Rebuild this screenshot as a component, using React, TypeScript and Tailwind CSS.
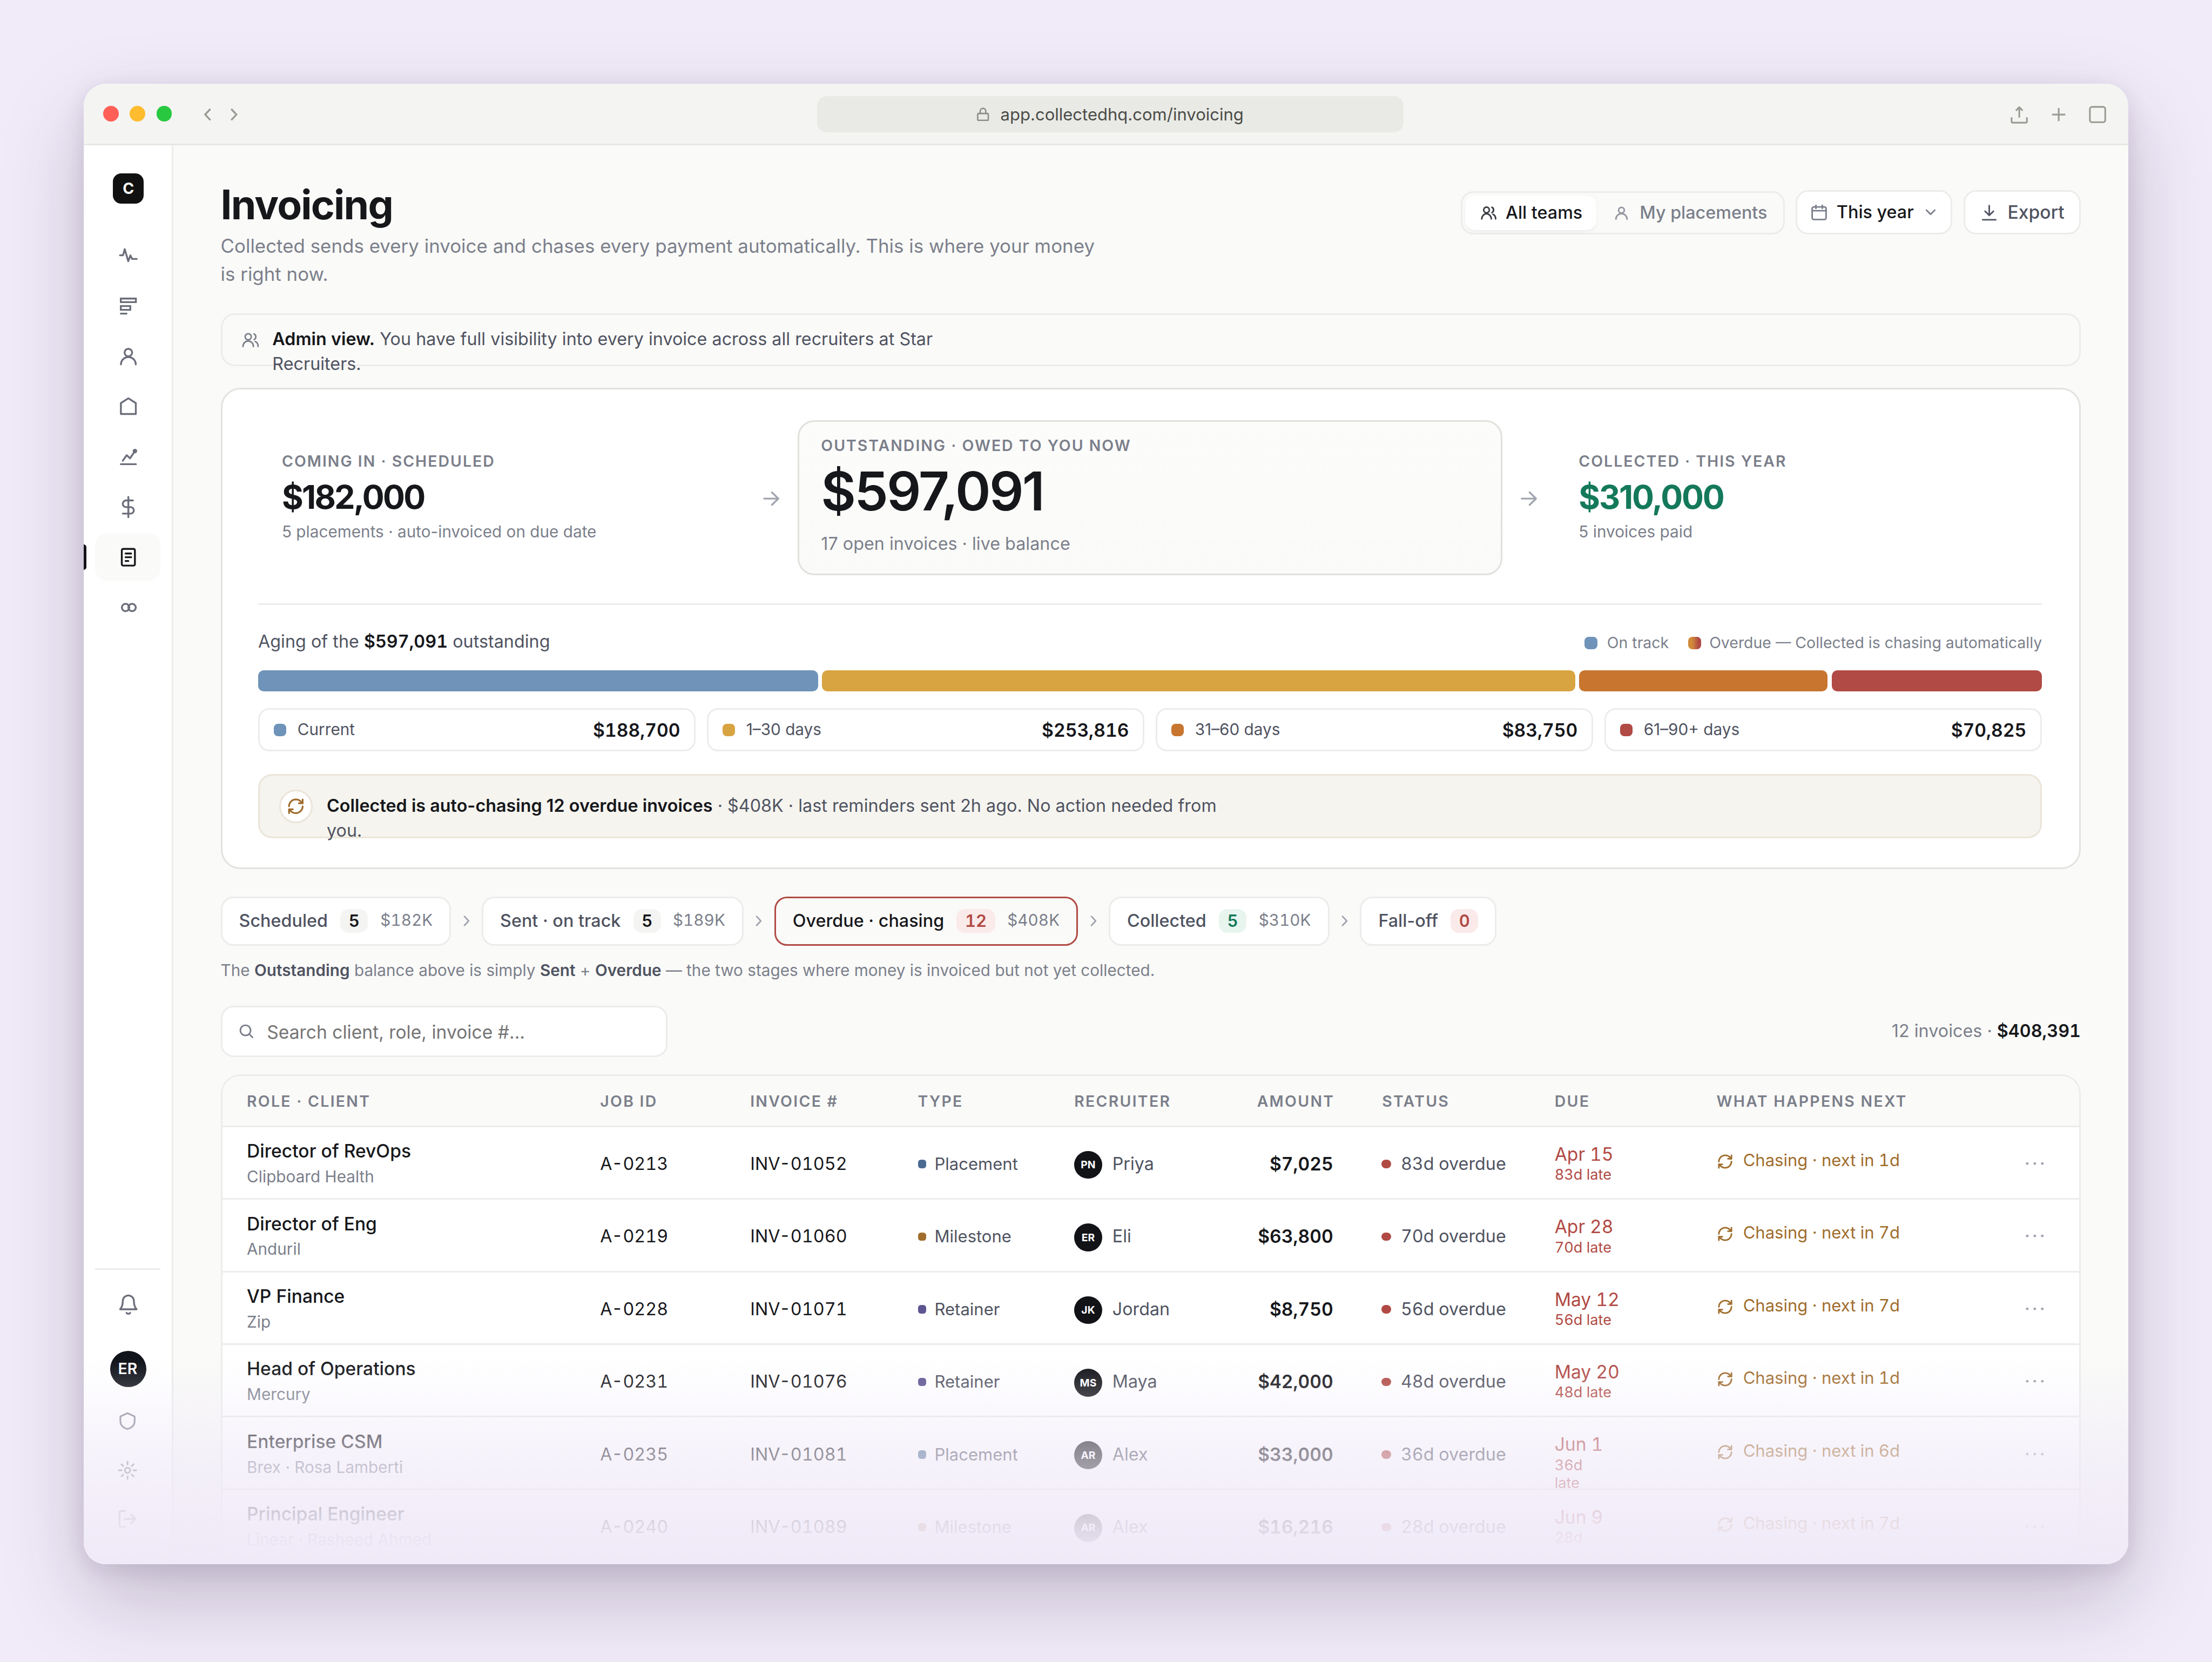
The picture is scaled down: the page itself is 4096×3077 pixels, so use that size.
import React from 'react'
import clsx from 'clsx'
import { RefreshCw } from 'lucide-react'

type IconProps = {
  className?: string
  children: React.ReactNode
  box?: number
  stroke?: number
}

const Icon = ({ className, children, box = 16, stroke = 1.3 }: IconProps) => (
  <svg
    viewBox={`0 0 ${box} ${box}`}
    fill="none"
    stroke="currentColor"
    strokeWidth={stroke}
    strokeLinecap="round"
    strokeLinejoin="round"
    className={clsx('shrink-0', className)}
  >
    {children}
  </svg>
)

const usersPaths = (
  <>
    <circle cx="6" cy="5" r="2.7" />
    <path d="M1.4 13.6a4.6 4.9 0 0 1 9.2 0M11.2 2.5a2.8 2.8 0 0 1 0 5M12.2 9.2c1.5.6 2.5 2.2 2.5 4.4" />
  </>
)

const userPaths = (
  <>
    <circle cx="8" cy="5.3" r="2.7" />
    <path d="M2.7 13.8a5.3 5.3 0 0 1 10.6 0" />
  </>
)

const navIcons = [
  <path d="M2 8h2.2l1.2-4.4 2.5 8.6 1.6-4.1 1.2 2.5H14" />,
  <path strokeLinejoin="miter" d="M2.6 2.6h10.8v2.6H2.6zM2.6 8h6.8v2.7H2.6zM2.6 13.4h4.1" />,
  userPaths,
  <path d="M2.65 5.5 8 2.1l5.35 3.4v7.85H2.65z" />,
  <>
    <path d="M2.6 13.3h10.8M4 10.8l2.8-3.9 2.4 2.2 3.4-5" />
    <circle cx="12.7" cy="3.9" r="1.6" fill="currentColor" stroke="none" />
  </>,
  <path d="M8 .7v14.6M11.3 3.3H6.4a2.4 2.4 0 0 0 0 4.8h3.2a2.3 2.3 0 0 1 0 4.6H4" />,
  <>
    <rect x="3.3" y="2.05" width="9.4" height="11.9" rx="1" />
    <path d="M6 5.3h4M6 8h4M6 10.7h2" />
  </>,
  <>
    <circle cx="6" cy="8" r="2.65" />
    <circle cx="10.65" cy="8" r="2.65" />
  </>,
]

const Sidebar = () => (
  <aside className="flex w-16 shrink-0 flex-col border-r-[1.2px] border-[#ececea] bg-white px-2 pt-5 pb-[15px]">
    <div className="ml-[13px] flex size-[22px] items-center justify-center rounded-md bg-[#111111] text-[11px] font-bold text-white">
      C
    </div>
    <nav className="mt-5 flex flex-col gap-0.5">
      {navIcons.map((icon, i) => (
        <div
          key={i}
          className={clsx(
            'relative flex h-[34px] items-center rounded-lg pl-4',
            i === 6 ? 'bg-[#fafaf8] text-[#16171b]' : 'text-[#6b6e7a]'
          )}
        >
          {i === 6 && (
            <span className="absolute top-2 -left-2 h-[18px] w-0.5 rounded-r-[2px] bg-[#111317]" />
          )}
          <Icon className="size-4">{icon}</Icon>
        </div>
      ))}
    </nav>
    <div className="mt-auto flex flex-col items-center border-t-[1.2px] border-[#ececea] text-[#6b6e7a]">
      <div className="flex h-[50px] items-center pl-px">
        <Icon className="size-4">
          <path d="M4 5.3a4 4 0 0 1 8 0c0 3.2 1 5 1.9 5.9H2.1C3 10.3 4 8.5 4 5.3zM6.7 13.8c.6.8 2 .8 2.6 0" />
        </Icon>
      </div>
      <div className="mt-2 ml-px flex size-[26px] items-center justify-center rounded-full bg-[#10131a] pr-px text-[11px] font-semibold text-white">
        ER
      </div>
      <div className="mt-[7px] flex h-[35px] items-center text-[#858995]">
        <Icon box={14} stroke={1.2} className="size-3.5">
          <path d="M7 1.3 12.1 3.6v3.5c0 2.9-2 4.7-5.1 5.6-3.1-.9-5.1-2.7-5.1-5.6V3.6z" />
        </Icon>
      </div>
      <div className="flex h-[35px] items-center text-[#858995]">
        <Icon box={14} stroke={1.2} className="size-3.5">
          <circle cx="7" cy="7" r="1.9" />
          <path d="M7 .8v1.9M7 11.3v1.9M.8 7h1.9M11.3 7h1.9M2.7 2.7l1.2 1.2M10.1 10.1l1.2 1.2M2.7 11.3l1.2-1.2M10.1 3.9l1.2-1.2" />
        </Icon>
      </div>
      <div className="flex h-[35px] items-center text-[#858995]">
        <Icon box={14} stroke={1.2} className="size-3.5">
          <path d="M5.2 1.3H2.6c-.8 0-1.3.5-1.3 1.3v8.8c0 .8.5 1.3 1.3 1.3h2.6M5.2 7h7.5M9.6 3.9 12.7 7l-3.1 3.1" />
        </Icon>
      </div>
    </div>
  </aside>
)

const TitleBar = () => (
  <div className="grid h-11 shrink-0 grid-cols-[1fr_420px_1fr] items-center border-b-[1.2px] border-[#e7e7e3] bg-[#f4f4f2]">
    <div className="flex items-center gap-2 pl-3.5">
      <span className="size-[11px] rounded-full bg-[#ff5f57]" />
      <span className="size-[11px] rounded-full bg-[#febc2e]" />
      <span className="size-[11px] rounded-full bg-[#28c840]" />
      <div className="ml-[11px] flex gap-1 pt-px text-[#9a9b94]">
        <Icon box={14} className="size-3.5">
          <path strokeLinecap="butt" strokeLinejoin="miter" d="M8.7 3 5 7l3.7 4" />
        </Icon>
        <Icon box={14} className="size-3.5">
          <path strokeLinecap="butt" strokeLinejoin="miter" d="m5.5 3 3.7 4-3.7 4" />
        </Icon>
      </div>
    </div>
    <div className="relative top-[0.5px] left-[3px] flex h-[26px] items-center justify-center gap-[7px] rounded-[7px] bg-[#e9eae5] pr-px text-[12px] text-[#4b4c48]">
      <Icon box={11} stroke={1} className="size-[11px] text-[#8b8c87]">
        <rect x="1.7" y="4.7" width="7.6" height="4.9" rx=".8" />
        <path d="M3.5 4.7V3a2 2 0 0 1 4 0v1.7" />
      </Icon>
      app.collectedhq.com/invoicing
    </div>
    <div className="flex justify-end gap-3.5 pt-px pr-[15px] text-[#9a9b94]">
      <Icon box={14} stroke={1.2} className="size-3.5">
        <path strokeLinecap="butt" d="M7 9.2V1.8M4.6 4.2 7 1.7l2.4 2.5M1.5 9v3c0 .5.3.8.8.8h9.4c.5 0 .8-.3.8-.8V9" />
      </Icon>
      <Icon box={14} stroke={1.2} className="size-3.5">
        <path strokeLinecap="butt" d="M7 2.3v9.4M2.3 7h9.4" />
      </Icon>
      <Icon box={14} stroke={1.2} className="size-3.5">
        <rect x="1.5" y="1.5" width="11" height="11" rx="1.5" />
      </Icon>
    </div>
  </div>
)

const Header = () => (
  <header className="flex justify-between">
    <div>
      <h1 className="text-[29px] leading-[33px] font-bold tracking-[-0.7px] text-[#16171b]">Invoicing</h1>
      <p className="mt-[3.3px] text-[13.5px] leading-5 text-[#7b7f8b]">
        Collected sends every invoice and chases every payment automatically. This is where your money
        <br />
        is right now.
      </p>
    </div>
    <div className="flex h-[38px] items-end gap-2 text-[12.5px] font-medium">
      <div className="flex h-[31px] w-[232px] rounded-[9px] border-[1.2px] border-[#ececea] bg-[#fafaf8] p-0.5">
        <div className="flex w-[94px] items-center gap-1.5 rounded-[7px] bg-white pl-[11px] text-[#16171b] shadow-[0_1px_2px_rgba(0,0,0,0.06)]">
          <Icon className="size-3 text-[#3c3e45]" stroke={1.5}>{usersPaths}</Icon>
          All teams
        </div>
        <div className="flex items-center gap-[7px] pl-3 text-[#7b7f8b]">
          <Icon className="size-3 text-[#9699a3]" stroke={1.5}>{userPaths}</Icon>
          My placements
        </div>
      </div>
      <div className="flex h-8 w-28 items-center rounded-[9px] border-[1.2px] border-[#ececea] bg-white pl-[9.5px] text-[#16171b]">
        <Icon box={12} stroke={1.1} className="size-3 text-[#7b7f8b]">
          <rect x="1" y="2" width="10" height="9" rx="1.2" />
          <path d="M1 4.7h10M3.7.8v2.2M8.3.8v2.2" />
        </Icon>
        <span className="ml-[6.5px]">This year</span>
        <Icon box={10} stroke={1.1} className="ml-[7px] size-2.5 text-[#7b7f8b]">
          <path d="m2 3.5 3 3 3-3" />
        </Icon>
      </div>
      <div className="flex h-8 w-[84px] items-center gap-[7px] rounded-[9px] border-[1.2px] border-[#ececea] bg-white pl-[11.5px] text-[13px] text-[#4f5361]">
        <Icon box={12} stroke={1.1} className="size-3">
          <path d="M6 1v6.8M3 5l3 3 3-3M1.3 11.2h9.4" />
        </Icon>
        Export
      </div>
    </div>
  </header>
)

const Arrow = () => (
  <div className="flex items-center justify-center pt-px text-[#a0a4af]">
    <Icon box={14} className="size-3.5">
      <path d="M1.9 7h10.2M7.5 2.5 12.1 7l-4.6 4.5" />
    </Icon>
  </div>
)

const Label = ({ children }: { children: React.ReactNode }) => (
  <div className="text-[11px] leading-[14px] font-semibold tracking-[0.77px] text-[#7b7f8b]">{children}</div>
)

const aging = [
  { label: 'Current', amount: 188700, text: '$188,700', color: 'bg-[#6f93b9]' },
  { label: '1–30 days', amount: 253816, text: '$253,816', color: 'bg-[#d8a441]' },
  { label: '31–60 days', amount: 83750, text: '$83,750', color: 'bg-[#c87530]' },
  { label: '61–90+ days', amount: 70825, text: '$70,825', color: 'bg-[#b14a44]' },
]

const Summary = () => (
  <section className="mt-[15.5px] rounded-[14px] border-[1.2px] border-[#e2e2de] bg-white pt-[22px] pr-[26.6px] pb-[21px] pl-[25.7px]">
    <div className="grid h-[111px] grid-cols-[1fr_38px_1.45fr_38px_1fr]">
      <div className="flex flex-col justify-center pb-px pl-[17px]">
        <Label>COMING IN · SCHEDULED</Label>
        <div className="mt-[4.5px] text-[23.5px] leading-7 font-bold tracking-[-1.05px] text-[#16171b]">$182,000</div>
        <div className="mt-[3px] text-[11.5px] leading-4 text-[#7b7f8b]">5 placements · auto-invoiced on due date</div>
      </div>
      <Arrow />
      <div className="rounded-xl border-[1.2px] border-[#e0e1dc] bg-linear-to-b from-[#fcfcfb] to-[#fafaf8] px-[15.7px] pt-2.5">
        <Label>OUTSTANDING · OWED TO YOU NOW</Label>
        <div className="mt-[5.7px] text-[38.5px] leading-10 font-semibold tracking-[-1.1px] text-[#16171b]">$597,091</div>
        <div className="mt-[8.8px] text-[12.5px] leading-[18px] text-[#7b7f8b]">17 open invoices · live balance</div>
      </div>
      <Arrow />
      <div className="flex flex-col justify-center pb-px pl-[16.5px]">
        <Label>COLLECTED · THIS YEAR</Label>
        <div className="mt-[4.5px] text-[23.5px] leading-7 font-bold tracking-[-0.85px] text-[#14795a]">$310,000</div>
        <div className="mt-[3px] text-[11.5px] leading-4 text-[#7b7f8b]">5 invoices paid</div>
      </div>
    </div>

    <div className="mt-5 flex justify-between border-t-[1.2px] border-[#ececea] pt-[17.5px] leading-[18px]">
      <p className="text-[12.5px] text-[#4f5361]">
        Aging of the <b className="font-semibold text-[#16171b] tabular-nums">$597,091</b> outstanding
      </p>
      <div className="relative top-[0.7px] flex items-center text-[11px] text-[#7b7f8b]">
        <span className="mr-[7px] size-[9px] rounded-[3px] bg-[#6f93b9]" />
        On track
        <span className="mr-1.5 ml-3.5 size-[9px] rounded-[3px] bg-linear-to-r from-[#d08a38] from-30% to-[#b14a44] to-80%" />
        Overdue — Collected is chasing automatically
      </div>
    </div>
    <div className="mt-[11.5px] flex h-[15px] gap-[3px]">
      {aging.map((a) => (
        <div key={a.label} className={clsx('basis-0 rounded-[4px]', a.color)} style={{ flexGrow: a.amount }} />
      ))}
    </div>
    <div className="mt-3 grid grid-cols-4 gap-2">
      {aging.map((a) => (
        <div key={a.label} className="flex h-[31px] items-center rounded-lg border-[1.2px] border-[#ececea] px-2.5">
          <span className={clsx('size-[9px] rounded-[3px]', a.color)} />
          <span className="ml-2 pb-px text-[11.5px] text-[#4f5361]">{a.label}</span>
          <span className="ml-auto pt-px text-[13px] font-semibold text-[#16171b] tabular-nums">{a.text}</span>
        </div>
      ))}
    </div>
    <div className="mt-4 flex h-[46px] rounded-[10px] border-[1.2px] border-[#ebe5d9] bg-[#f5f4ef] pl-3.5">
      <div className="mt-2.5 flex size-6 shrink-0 items-center justify-center rounded-full border-[1.2px] border-[#ebe5d9] bg-white text-[#a06d2c]">
        <RefreshCw className="size-[13px]" strokeWidth={2.3} />
      </div>
      <p className="mt-[12.7px] ml-2.5 text-[12.5px] leading-[18px] text-[#4f5361]">
        <b className="font-semibold text-[#16171b]">Collected is auto-chasing 12 overdue invoices</b> · $408K · last
        reminders sent 2h ago. No action needed from
        <br />
        you.
      </p>
    </div>
  </section>
)

const stages = [
  { label: 'Scheduled', count: 5, amount: '$182K', badge: 'bg-[#f4f4f2] text-[#16171b]', width: 'w-[165px]' },
  { label: 'Sent · on track', count: 5, amount: '$189K', badge: 'bg-[#f4f4f2] text-[#16171b]', width: 'w-[187.5px]' },
  { label: 'Overdue · chasing', count: 12, amount: '$408K', badge: 'bg-[#fbeaea] text-[#b14a44]', width: 'w-[217.5px]', active: true },
  { label: 'Collected', count: 5, amount: '$310K', badge: 'bg-[#e8f5ef] text-[#14795a]', width: 'w-[158px]' },
  { label: 'Fall-off', count: 0, badge: 'bg-[#fbeaea] text-[#b14a44]', width: 'w-[97.5px]' },
]

const Stages = () => (
  <div className="mt-[19.8px] flex items-center">
    {stages.map((s, i) => (
      <React.Fragment key={s.label}>
        {i > 0 && (
          <Icon box={10} stroke={1.1} className="mx-1.5 size-2.5 text-[#a0a4af]">
            <path d="m3.5 1.8 3 3.2-3 3.2" />
          </Icon>
        )}
        <div
          className={clsx(
            'flex h-[35px] items-center rounded-[9px] border-[1.2px] px-3 text-[12.5px] font-medium whitespace-nowrap',
            s.width,
            s.active ? 'border-[#b14a44] bg-[#fafaf8] text-[#16171b]' : 'border-[#ececea] bg-white text-[#4f5361]'
          )}
        >
          {s.label}
          <span className={clsx('ml-[9px] rounded-md px-1.5 text-[12px] leading-[17px] font-semibold tabular-nums', s.badge)}>
            {s.count}
          </span>
          {s.amount && (
            <span className="ml-auto pb-0.5 text-[11.5px] font-normal text-[#7b7f8b] tabular-nums">{s.amount}</span>
          )}
        </div>
      </React.Fragment>
    ))}
  </div>
)

const columns = 'grid grid-cols-[253px_107.5px_120px_112px_100px_85.5px_158.5px_116px_221px_auto] pl-[17.6px]'

const invoices = [
  { role: 'Director of RevOps', client: 'Clipboard Health', job: 'A-0213', inv: 'INV-01052', type: 'Placement', initials: 'PN', who: 'Priya', amount: '$7,025', days: '83d', due: 'Apr 15', late: ['83d late'], next: '1d' },
  { role: 'Director of Eng', client: 'Anduril', job: 'A-0219', inv: 'INV-01060', type: 'Milestone', initials: 'ER', who: 'Eli', amount: '$63,800', days: '70d', due: 'Apr 28', late: ['70d late'], next: '7d' },
  { role: 'VP Finance', client: 'Zip', job: 'A-0228', inv: 'INV-01071', type: 'Retainer', initials: 'JK', who: 'Jordan', amount: '$8,750', days: '56d', due: 'May 12', late: ['56d late'], next: '7d' },
  { role: 'Head of Operations', client: 'Mercury', job: 'A-0231', inv: 'INV-01076', type: 'Retainer', initials: 'MS', who: 'Maya', amount: '$42,000', days: '48d', due: 'May 20', late: ['48d late'], next: '1d' },
  { role: 'Enterprise CSM', client: 'Brex · Rosa Lamberti', job: 'A-0235', inv: 'INV-01081', type: 'Placement', initials: 'AR', who: 'Alex', amount: '$33,000', days: '36d', due: 'Jun 1', late: ['36d', 'late'], next: '6d' },
  { role: 'Principal Engineer', client: 'Linear · Rasheed Ahmed', job: 'A-0240', inv: 'INV-01089', type: 'Milestone', initials: 'AR', who: 'Alex', amount: '$16,216', days: '28d', due: 'Jun 9', late: ['28d'], next: '7d' },
]

const typeColors: Record<string, string> = {
  Placement: 'bg-[#4a6a92]',
  Milestone: 'bg-[#a06d2c]',
  Retainer: 'bg-[#5d5591]',
}

const InvoiceTable = () => (
  <div className="mt-3 overflow-hidden rounded-t-[14px] border-[1.2px] border-b-0 border-[#ececea] bg-white">
    <div
      className={clsx(
        columns,
        'h-[36.8px] border-b-[1.2px] border-[#ececea] bg-[#fafaf8] text-[11px] leading-9 font-semibold tracking-[0.88px] text-[#7b7f8b]'
      )}
    >
      <span>ROLE · CLIENT</span>
      <span>JOB ID</span>
      <span>INVOICE #</span>
      <span>TYPE</span>
      <span>RECRUITER</span>
      <span className="-mr-px text-right">AMOUNT</span>
      <span className="pl-[35px]">STATUS</span>
      <span>DUE</span>
      <span>WHAT HAPPENS NEXT</span>
    </div>
    {invoices.map((r) => (
      <div
        key={r.job}
        className={clsx(columns, 'h-[52px] border-b-[1.2px] border-[#ececea] text-[12.5px] leading-[18px] text-[#4f5361]')}
      >
        <div className="pt-[8.3px]">
          <div className="text-[13px] font-medium text-[#16171b]">{r.role}</div>
          <div className="mt-[1.2px] text-[11.5px] leading-4 text-[#7b7f8b]">{r.client}</div>
        </div>
        <span className="pt-[17.5px] text-[#16171b] tabular-nums">{r.job}</span>
        <span className="pt-[17.5px] text-[#16171b] tabular-nums">{r.inv}</span>
        <div className="flex h-[35.5px] items-center gap-1.5 pt-[17.5px] text-[12px]">
          <span className={clsx('size-1.5 rounded-[2px]', typeColors[r.type])} />
          {r.type}
        </div>
        <div className="flex items-start gap-[7.3px] pt-[17.5px]">
          <span className="-mt-[0.5px] flex size-5 items-center justify-center rounded-full bg-[#111317] text-[7.5px] font-bold text-white">
            {r.initials}
          </span>
          {r.who}
        </div>
        <span className="pt-[17.5px] text-right text-[13px] font-semibold text-[#16171b] tabular-nums">{r.amount}</span>
        <div className="flex h-[35.5px] items-center pt-[17.5px] pl-[34.4px] tabular-nums">
          <span className="mr-[7px] h-1.5 w-[7px] rounded-full bg-[#b14a44]" />
          {r.days} overdue
        </div>
        <div className="pt-[11.2px] text-[#b14a44] tabular-nums">
          <div className="text-[13px] leading-4">{r.due}</div>
          <div className="mt-[0.8px] text-[10.5px] leading-[12.7px]">
            {r.late.map((line) => (
              <div key={line}>{line}</div>
            ))}
          </div>
        </div>
        <div className="flex items-start gap-[7px] pt-[15.6px] text-[12px] leading-4 text-[#a06d2c] tabular-nums">
          <RefreshCw className="mt-[3px] size-3" strokeWidth={2.2} />
          Chasing · next in {r.next}
        </div>
        <svg viewBox="0 0 14 4" className="mt-6 h-1 w-3.5 fill-[#a0a4af]">
          <circle cx="1.5" cy="2" r=".95" />
          <circle cx="6.9" cy="2" r=".95" />
          <circle cx="12.3" cy="2" r=".95" />
        </svg>
      </div>
    ))}
  </div>
)

const App = () => {
  return (
    <div className="h-screen w-screen overflow-hidden bg-[#f1ebf9]">
      <div className="h-[1190px] w-[1584px] px-[60px] pt-[60px] font-['Inter',sans-serif] [zoom:2.58586]">
        <div className="h-[1060px] rounded-2xl shadow-[0_24px_60px_rgba(30,20,50,0.22),0_4px_16px_rgba(30,20,50,0.10)]">
          <div className="relative flex h-full flex-col overflow-hidden rounded-2xl bg-[#fafaf8]">
            <TitleBar />
            <div className="flex min-h-0 flex-1">
              <Sidebar />
              <main className="min-w-0 flex-1 overflow-hidden px-[34px] pt-[26px]">
                <Header />
                <div className="mt-[18px] flex h-[38px] rounded-[10px] border-[1.2px] border-[#ececea] pl-[13.6px]">
                  <Icon className="mt-[11.5px] size-[13px] text-[#7b7f8b]">{usersPaths}</Icon>
                  <p className="mt-[8.4px] ml-[9.3px] text-[12.5px] leading-[18px] text-[#4f5361]">
                    <b className="font-semibold text-[#16171b]">Admin view.</b> You have full visibility into every
                    invoice across all recruiters at Star
                    <br />
                    Recruiters.
                  </p>
                </div>
                <Summary />
                <Stages />
                <p className="mt-2.5 text-[11.5px] leading-4 text-[#7b7f8b]">
                  The <b className="font-semibold text-[#4f5361]">Outstanding</b> balance above is simply{' '}
                  <b className="font-semibold text-[#4f5361]">Sent</b> +{' '}
                  <b className="font-semibold text-[#4f5361]">Overdue</b> — the two stages where money is invoiced but
                  not yet collected.
                </p>
                <div className="mt-[17px] flex items-center justify-between">
                  <div className="flex h-[37px] w-80 items-center rounded-[9px] border-[1.2px] border-[#ececea] bg-white pl-[11.6px] text-[13px] text-[#757575]">
                    <Icon box={12} stroke={1.2} className="size-[11px] text-[#7b7f8b]">
                      <circle cx="5.3" cy="5.3" r="4" />
                      <path d="m8.3 8.3 2.5 2.5" />
                    </Icon>
                    <span className="ml-[9.4px] pt-px">Search client, role, invoice #...</span>
                  </div>
                  <p className="text-[12.5px] text-[#7b7f8b]">
                    12 invoices · <b className="font-semibold text-[#16171b] tabular-nums">$408,391</b>
                  </p>
                </div>
                <InvoiceTable />
              </main>
            </div>
            {/* page fades into the backdrop colour */}
            <div className="absolute inset-x-0 bottom-0 h-[150px] bg-[linear-gradient(to_bottom,rgba(240,234,248,0)_2%,rgba(240,234,248,0.56)_45%,rgba(240,234,248,0.88)_78%,#f0eaf8_98%)]" />
          </div>
        </div>
      </div>
    </div>
  )
}

export default App
